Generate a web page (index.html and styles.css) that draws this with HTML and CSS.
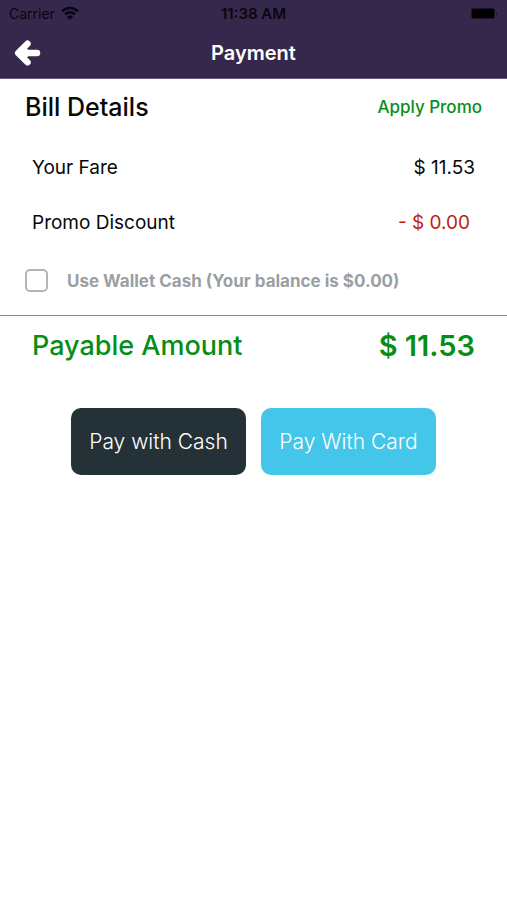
FILE: index.html
```html
<!DOCTYPE html>
<html lang="en">
<head>
<meta charset="utf-8">
<meta name="viewport" content="width=device-width, initial-scale=1">
<title>Payment</title>
<link rel="stylesheet" href="styles.css">
</head>
<body>
<header class="header">
  <div class="status">
    <span class="carrier">Carrier
      <svg class="wifi" viewBox="0 0 18 14" aria-hidden="true"><path d="M1.200 5.200a11.200 11.200 0 0 1 15.600 0M4 8.400a7.200 7.200 0 0 1 10 0" fill="none" stroke="currentColor" stroke-width="2.600"/><path d="M5.900 10.700a4.400 4.400 0 0 1 6.200 0L9 13.900z" fill="currentColor"/></svg>
    </span>
    <span class="time">11:38 AM</span>
    <svg class="battery" viewBox="0 0 28 12" aria-hidden="true"><rect x="1" y="0" width="24" height="11" rx="3" fill="#1c142c"/><rect x="2" y="1" width="22" height="9" rx="1.500" fill="#000"/><path d="M26 4v3.600q1.200-.5 1.200-1.800t-1.200-1.800z" fill="#1c142c"/></svg>
  </div>
  <nav class="nav">
    <button class="back" type="button" aria-label="Back"><svg viewBox="0 0 28 28" aria-hidden="true"><path d="M14.500 4.700 5.200 14l9.300 9.300M7 14h17" fill="none" stroke="currentColor" stroke-width="6.500" stroke-linecap="round" stroke-linejoin="round"/><path d="M7 10.800 15 10v8l-8-.8z" fill="currentColor"/></svg></button>
    <h1 class="title">Payment</h1>
  </nav>
</header>
<main>
  <section class="bill">
    <div class="heading"><h2>Bill Details</h2><a class="promo" href="#promo">Apply Promo</a></div>
    <div class="row"><span>Your Fare</span><span>$ 11.53</span></div>
    <div class="row"><span>Promo Discount</span><span class="discount">- $ 0.00</span></div>
    <label class="wallet"><input type="checkbox">Use Wallet Cash (Your balance is $0.00)</label>
  </section>
  <div class="total"><span>Payable Amount</span><strong>$ 11.53</strong></div>
  <div class="actions">
    <button class="pay cash" type="button">Pay with Cash</button>
    <button class="pay card" type="button">Pay With Card</button>
  </div>
</main>
</body>
</html>
```
FILE: styles.css
```css
* { box-sizing: border-box; }
body { margin: 0; background: #fff; color: #080808; font-family: Inter, "Liberation Sans", sans-serif; }
h1, h2 { margin: 0; }
button { font-family: inherit; border: 0; cursor: pointer; }
.header { background: #35284c; border-bottom: 1px solid #665b78; }
.status { display: grid; grid-template-columns: 1fr auto 1fr; align-items: center; height: 27px; padding: 0 9px; color: #080610; font-size: 14px; }
.carrier { display: flex; align-items: center; gap: 6px; }
.wifi { width: 18px; height: 14px; margin-bottom: 2px; }
.time { font-size: 15px; font-weight: 600; }
.battery { width: 28px; height: 12px; justify-self: end; }
.nav { display: grid; grid-template-columns: 1fr auto 1fr; align-items: center; height: 51px; padding: 0 13px; color: #fff; }
.back { display: flex; justify-self: start; padding: 0; background: none; color: inherit; }
.back svg { width: 28px; height: 28px; }
.title { font-size: 20px; font-weight: 600; }
.bill { padding-bottom: 4px; border-bottom: 1px solid #888; }
.heading { display: flex; align-items: center; justify-content: space-between; height: 56px; margin-bottom: 5px; padding: 0 25px; }
.heading h2 { font-size: 25px; font-weight: 500; }
.promo { color: #078e18; font-size: 17px; font-weight: 500; text-decoration: none; }
.row { display: flex; align-items: center; justify-content: space-between; height: 55px; padding: 0 32px; font-size: 19px; }
.discount { color: #bd2313; padding-right: 5px; }
.wallet { display: flex; align-items: center; gap: 19px; height: 61px; padding: 0 25px; color: #9b9fa2; font-size: 17px; font-weight: 700; }
.wallet input { appearance: none; width: 23px; height: 23px; margin: 0; border: 2px solid #b4b4b4; border-radius: 5px; }
.total { display: flex; align-items: center; justify-content: space-between; height: 58px; padding: 0 32px; color: #078e18; font-size: 27px; }
.total span { font-weight: 500; }
.total strong { font-size: 29px; font-weight: 600; }
.actions { display: grid; grid-template-columns: 1fr 1fr; gap: 15px; padding: 34px 14%; }
.pay { height: 67px; padding: 0; border-radius: 10px; color: #fff; font-size: 21px; font-weight: 350; }
.cash { background: #243136; }
.card { background: #43c6e9; }
```
